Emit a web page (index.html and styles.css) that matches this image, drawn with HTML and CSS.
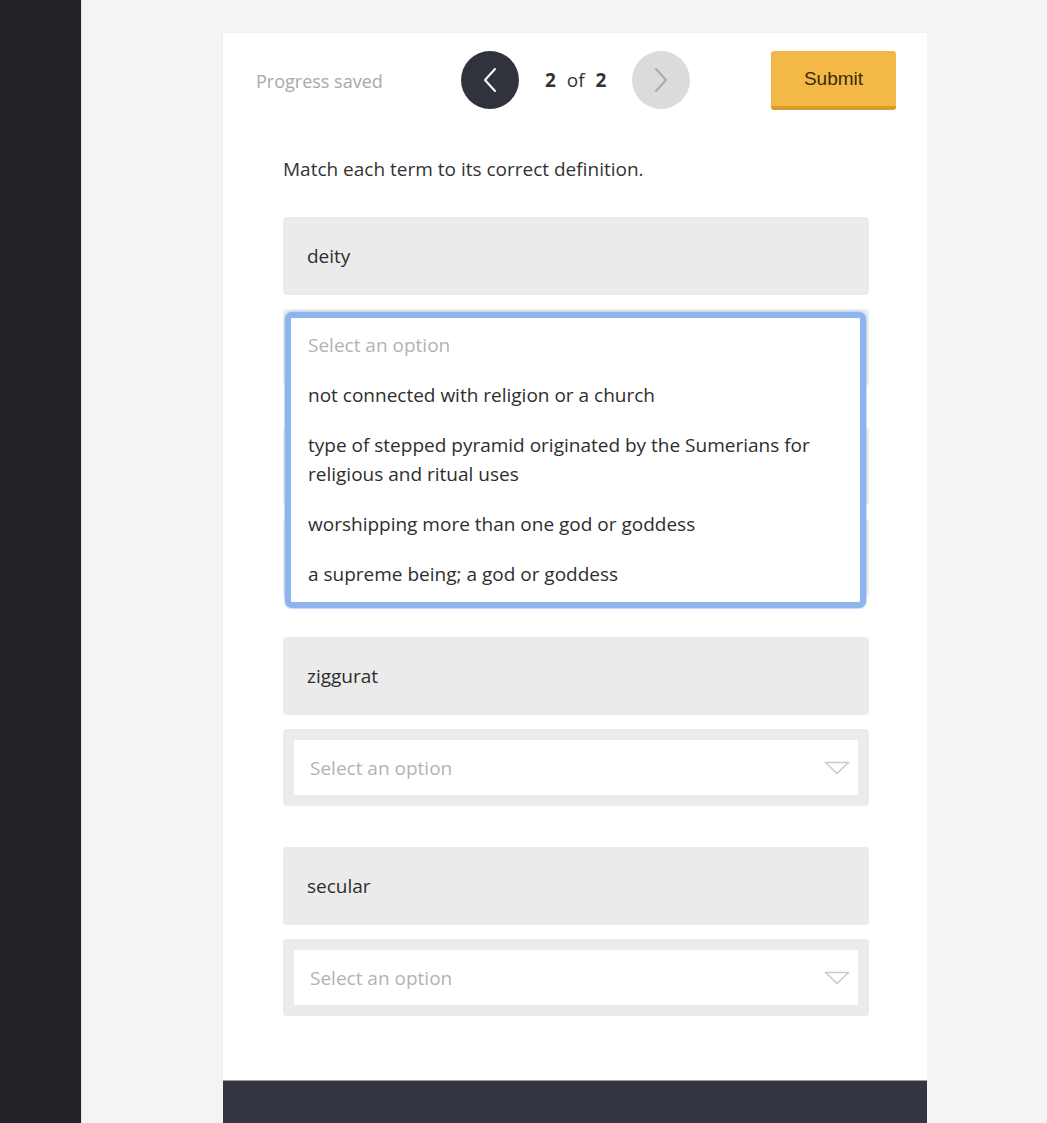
FILE: index.html
```html
<!DOCTYPE html>
<html lang="en">
<head>
<meta charset="utf-8">
<title>Matching</title>
<link rel="stylesheet" href="styles.css">
</head>
<body>
<div class="app">
  <aside class="sidebar"></aside>
  <main class="stage">
    <section class="card">
      <header class="topbar">
        <span class="saved">Progress saved</span>
        <nav class="pager">
          <button class="circle prev" aria-label="Previous">
            <svg width="14" height="26" viewBox="0 0 14 26"><path d="M12 2 L2 13 L12 24" fill="none" stroke="#fff" stroke-width="2" stroke-linecap="round" stroke-linejoin="round"/></svg>
          </button>
          <span class="count"><b>2</b> of <b>2</b></span>
          <button class="circle next" aria-label="Next">
            <svg width="14" height="26" viewBox="0 0 14 26"><path d="M2 2 L12 13 L2 24" fill="none" stroke="#a8a9ab" stroke-width="2" stroke-linecap="round" stroke-linejoin="round"/></svg>
          </button>
        </nav>
        <button class="submit">Submit</button>
      </header>

      <div class="body">
        <p class="prompt">Match each term to its correct definition.</p>

        <div class="pair">
          <div class="term">deity</div>
          <div class="select open">
            <div class="select-inner"></div>
            <ul class="menu">
              <li class="opt muted">Select an option</li>
              <li class="opt">not connected with religion or a church</li>
              <li class="opt">type of stepped pyramid originated by the Sumerians for religious and ritual uses</li>
              <li class="opt">worshipping more than one god or goddess</li>
              <li class="opt">a supreme being; a god or goddess</li>
            </ul>
          </div>
        </div>

        <div class="pair">
          <div class="term"></div>
          <div class="select">
            <div class="select-inner"></div>
          </div>
        </div>

        <div class="pair">
          <div class="term">ziggurat</div>
          <div class="select">
            <div class="select-inner"><span class="placeholder">Select an option</span>
              <svg class="tri" width="26" height="14" viewBox="0 0 26 14"><path d="M1.5 1.5 L24.5 1.5 L13 12.5 Z" fill="none" stroke="#c9c9c9" stroke-width="1.5" stroke-linejoin="round"/></svg>
            </div>
          </div>
        </div>

        <div class="pair">
          <div class="term">secular</div>
          <div class="select">
            <div class="select-inner"><span class="placeholder">Select an option</span>
              <svg class="tri" width="26" height="14" viewBox="0 0 26 14"><path d="M1.5 1.5 L24.5 1.5 L13 12.5 Z" fill="none" stroke="#c9c9c9" stroke-width="1.5" stroke-linejoin="round"/></svg>
            </div>
          </div>
        </div>
      </div>
    </section>
    <footer class="footbar"></footer>
  </main>
</div>
</body>
</html>
```

FILE: styles.css
```css
* { box-sizing: border-box; }
html, body { margin: 0; padding: 0; height: 100%; }
body {
  background: #f4f4f4;
  font-family: "Open Sans", "Noto Sans", sans-serif;
  color: #333;
  overflow: hidden;
}
.app { display: flex; min-height: 100vh; }
.sidebar {
  width: 82px;
  flex: 0 0 82px;
  background: #222328;
  border-right: 1px solid #e6e6e6;
}
.stage {
  flex: 1;
  display: flex;
  flex-direction: column;
  padding-top: 33px;
  padding-left: 141px;
  width: 846px;
}
.card {
  width: 704px;
  background: #fff;
  box-shadow: -1px 0 2px rgba(0,0,0,0.04);
}
.topbar {
  display: flex;
  align-items: center;
  height: 93px;
  padding: 1px 31px 0 33px;
}
.saved {
  font-size: 18px;
  color: #a9a9a9;
  width: 205px;
  padding-top: 2px;
}
.pager { display: flex; align-items: center; }
.circle {
  width: 58px;
  height: 58px;
  border-radius: 50%;
  border: none;
  padding: 0;
  display: flex;
  align-items: center;
  justify-content: center;
}
.prev { background: #30333c; }
.next { background: #dadbdd; }
.count {
  font-size: 19px;
  color: #333;
  margin: 0 26px 0 26px;
  word-spacing: 6px;
}
.count b { font-weight: 700; }
.submit {
  margin-left: auto;
  width: 125px;
  height: 59px;
  background: #f3b845;
  border: none;
  border-bottom: 4px solid #d99b2e;
  border-radius: 3px;
  font-family: "Liberation Sans", Arial, sans-serif;
  font-size: 19px;
  color: #3b2a0e;
  padding: 2px 0 0;
}
.body {
  padding: 0 58px 64px 60px;
}
.prompt {
  margin: 0 0 35px;
  padding-top: 30px;
  font-size: 19px;
  line-height: 26px;
  color: #333;
}
.pair { margin-bottom: 41px; }
.pair:last-child { margin-bottom: 0; }
.term {
  height: 78px;
  background: #ebebeb;
  border-radius: 4px;
  padding: 0 24px;
  display: flex;
  align-items: center;
  font-size: 19px;
  color: #2e2e2e;
  margin-bottom: 14px;
}
.select {
  position: relative;
  height: 77px;
  background: #ebebeb;
  border-radius: 4px;
  padding: 11px;
}
.select-inner {
  height: 100%;
  background: #fff;
  display: flex;
  align-items: center;
  padding: 0 8px 0 16px;
}
.placeholder {
  font-size: 19px;
  color: #b3b3b3;
  flex: 1;
}
.tri { flex: 0 0 auto; margin-top: 1px; }
.menu {
  position: absolute;
  top: 3px;
  left: 2px;
  right: 3px;
  margin: 0;
  padding: 2px 0 3px;
  list-style: none;
  background: #fff;
  border: 6px solid #8db4ec;
  border-radius: 7px;
  box-shadow: 0 0 1px 1px rgba(160,195,240,0.6);
  z-index: 5;
}
.opt {
  font-size: 19px;
  line-height: 29px;
  padding: 10.5px 20px 10.5px 17px;
  color: #2e2e2e;
}
.opt.muted { color: #b3b3b3; }
.footbar {
  width: 704px;
  flex: 1;
  min-height: 40px;
  background: #333640;
  border-top: 1px solid #9a9ca2;
}
```
